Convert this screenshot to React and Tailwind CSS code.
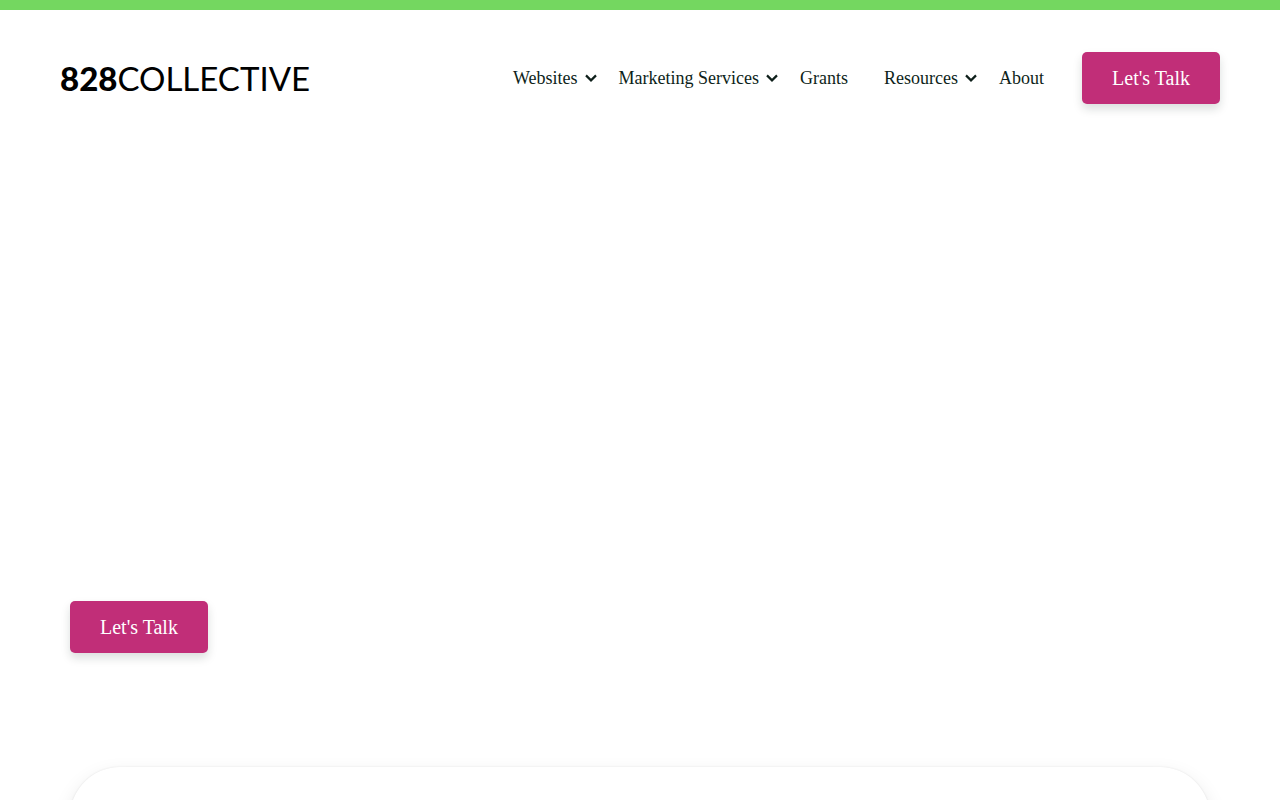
import React from "react";

const links = [
  { label: "Websites", menu: true },
  { label: "Marketing Services", menu: true },
  { label: "Grants", menu: false },
  { label: "Resources", menu: true },
  { label: "About", menu: false },
];

function Chevron() {
  return (
    <svg className="w-3 h-3" viewBox="0 0 12 12" fill="none" aria-hidden="true">
      <path d="M1 3.4 6 8.4 11 3.4" stroke="currentColor" strokeWidth="2.2" />
    </svg>
  );
}

function Logo() {
  return (
    <a
      href="#home"
      className="flex text-[33px] leading-10 text-black font-['Lato',sans-serif]"
    >
      <span className="font-black font-['Lato_Black','Lato',sans-serif]">828</span>
      <span>COLLECTIVE</span>
    </a>
  );
}

function TalkButton() {
  return (
    <button
      type="button"
      className="rounded-[5px] bg-[#c12e78] px-[30px] py-3 text-xl leading-7 text-white whitespace-nowrap shadow-[0_5px_10px_rgba(14,31,26,0.15)]"
    >
      Let's Talk
    </button>
  );
}

function NavLink({ item }) {
  return (
    <a
      href="#menu"
      className={`flex items-center gap-[7px] whitespace-nowrap ${
        item.menu ? "pr-1" : "pr-[18px]"
      }`}
    >
      {item.label}
      {item.menu && <Chevron />}
    </a>
  );
}

export default function App() {
  return (
    <div className="h-screen overflow-hidden border-t-10 border-[#74d760] bg-white text-[#0e1f1a] font-['Liberation_Serif',serif]">
      <header className="flex items-center justify-between px-[60px] pt-[42px]">
        <Logo />
        <div className="flex items-center gap-5">
          <nav className="flex items-center gap-[18px] text-lg">
            {links.map((item) => (
              <NavLink key={item.label} item={item} />
            ))}
          </nav>
          <TalkButton />
        </div>
      </header>
      <main className="px-[70px]">
        <section className="pt-[497px] pb-[114px]">
          <TalkButton />
        </section>
        <section className="h-96 rounded-[50px] bg-white shadow-[0_0_2px_rgba(0,0,0,0.1),0_8px_20px_rgba(0,0,0,0.1)]"></section>
      </main>
    </div>
  );
}
